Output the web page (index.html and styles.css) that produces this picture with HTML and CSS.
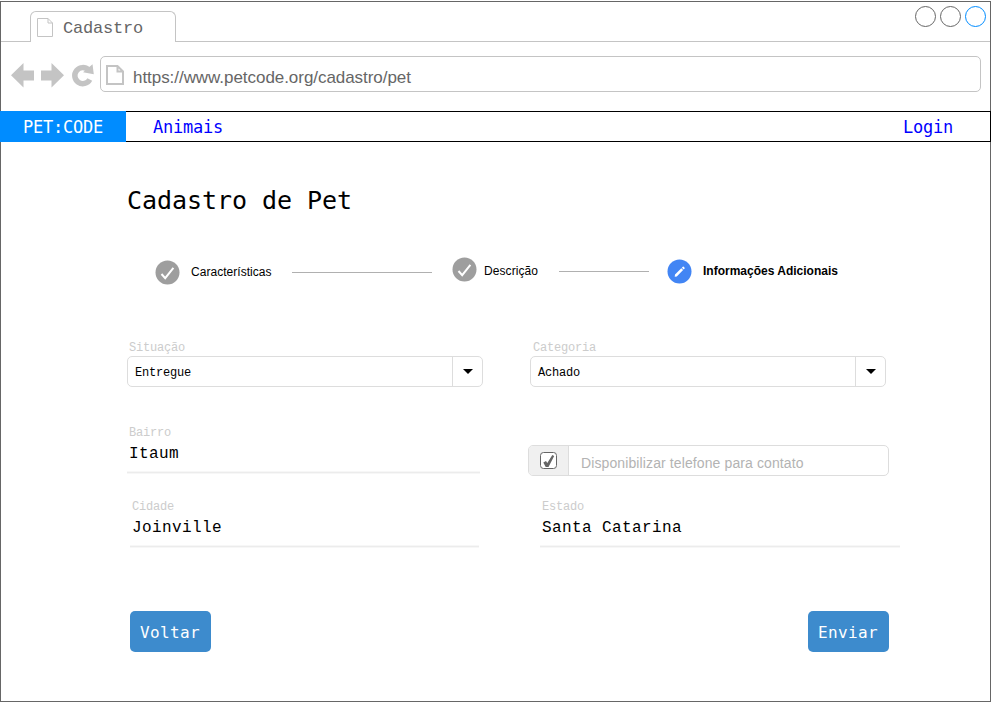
FILE: index.html
```html
<!DOCTYPE html>
<html lang="pt-BR">
<head>
<meta charset="utf-8">
<title>Cadastro</title>
<link rel="stylesheet" href="styles.css">
</head>
<body>
<div class="window">
  <header class="titlebar">
    <div class="tab">
      <svg class="tab-icon" width="16" height="19" viewBox="0 0 16 19"><path d="M.5.5h10.500l4.500 4.500v13.500H.5zM11 .5V5h4.500"/></svg>
      <span>Cadastro</span>
    </div>
    <div class="controls"><i></i><i></i><i class="active"></i></div>
  </header>
  <div class="toolbar">
    <svg class="nav-icons" width="84" height="26" viewBox="0 0 84 26">
      <path d="M0 12.300 12.500 0v7.500H23v10H12.500v7zM30 7.500h10.500V0L53 12.300 40.500 24.500v-7H30z"/>
      <path class="reload" d="M77.500 7A8 8 0 1 0 78.800 16.500"/>
      <path d="M81.500 1.200 82.800 11.300 72 9.300z"/>
    </svg>
    <div class="address">
      <svg class="page-icon" width="18" height="20" viewBox="0 0 18 20"><path d="M1 1h10.500L17 6.500V19H1zM11.500 1v5.500H17"/></svg>
      <span>https://www.petcode.org/cadastro/pet</span>
    </div>
  </div>
  <nav class="menu">
    <span class="brand">PET:CODE</span>
    <a class="animals">Animais</a>
    <a class="login">Login</a>
  </nav>
  <main>
    <h1>Cadastro de Pet</h1>
    <div class="steps">
      <svg class="dot first" width="25" height="25" viewBox="-.5 -.5 25 25"><circle cx="12" cy="12" r="12"/><path d="m6 13.500 3.700 4.200 8.200-10.300"/></svg>
      <span class="step one">Características</span>
      <hr class="line-one">
      <svg class="dot second" width="25" height="25" viewBox="-.5 -.5 25 25"><circle cx="12" cy="12" r="12"/><path d="m6 13.500 3.700 4.200 8.200-10.300"/></svg>
      <span class="step two">Descrição</span>
      <hr class="line-two">
      <svg class="dot current" width="25" height="25" viewBox="-.5 -.5 25 25"><circle cx="12" cy="12" r="12"/><path class="pencil" d="m7.200 17.300.3-2.200 6.300-6.300 1.800 1.800-6.300 6.300zM14.400 8.200l.9-.9q.5-.4.900 0l.9.900q.4.500 0 .9l-.9.900z"/></svg>
      <span class="step three">Informações Adicionais</span>
    </div>
    <div class="selects">
      <div class="field">
        <label>Situação</label>
        <div class="select"><span>Entregue</span><b><svg width="10" height="5" viewBox="0 0 10 5"><path d="M0 0h10L5 5z"/></svg></b></div>
      </div>
      <div class="field category">
        <label>Categoria</label>
        <div class="select"><span>Achado</span><b><svg width="10" height="5" viewBox="0 0 10 5"><path d="M0 0h10L5 5z"/></svg></b></div>
      </div>
    </div>
    <div class="contact-row">
      <div class="input district"><label>Bairro</label><span>Itaum</span></div>
      <div class="contact">
        <div class="check"><svg width="17" height="17" viewBox="0 0 17 17"><rect x=".5" y=".5" width="16" height="16" rx="3"/><path d="m3.300 10.500 2.700-1.400 1.300 2L12.300 3l1.900 1.100L8.500 15H5.700z"/></svg></div>
        <span>Disponibilizar telefone para contato</span>
      </div>
    </div>
    <div class="place-row">
      <div class="input city"><label>Cidade</label><span>Joinville</span></div>
      <div class="input state"><label>Estado</label><span>Santa Catarina</span></div>
    </div>
    <div class="actions"><button>Voltar</button><button>Enviar</button></div>
  </main>
</div>
</body>
</html>
```
FILE: styles.css
```css
* { box-sizing: border-box; }
body { margin: 0; padding-top: 1px; background: #fff; overflow: hidden; font-family: "Liberation Mono", monospace; color: #000; }
svg { display: block; flex: none; }
.window { width: 991px; height: 701px; border: 1px solid #666; }

.titlebar { height: 40px; display: flex; justify-content: space-between; box-shadow: inset 0 -1px #c4c4c4; }
.tab { width: 146px; height: 31px; margin: 9px 0 0 29px; padding-left: 6px; display: flex; gap: 10px; background: #fff; border: 1px solid #c4c4c4; border-bottom: 0; border-radius: 6px 6px 0 0; color: #666; font-size: 17px; line-height: 33px; letter-spacing: -.2px; }
.tab-icon { margin-top: 6px; fill: none; stroke: #c4c4c4; }
.controls { display: flex; gap: 4px; padding: 4px 4px 0 0; }
.controls i { width: 21px; height: 21px; border: 1px solid #666; border-radius: 50%; }
.controls .active { border-color: #008cff; }

.toolbar { height: 69px; padding: 14px 9px 0 10px; display: flex; }
.nav-icons { margin-top: 7px; fill: #c4c4c4; }
.reload { fill: none; stroke: #c4c4c4; stroke-width: 5.500; }
.address { width: 881px; height: 36px; margin-left: 5px; padding-left: 5px; display: flex; gap: 9px; border: 1px solid #c4c4c4; border-radius: 5px; color: #666; font: 17px/41px "Liberation Sans", sans-serif; letter-spacing: -.05px; }
.page-icon { margin-top: 8px; fill: none; stroke: #c4c4c4; stroke-width: 2; }

.menu { height: 31px; margin: 0 -1px; display: flex; border: 1px solid #000; border-left: 0; font: 17px/30px "DejaVu Sans Mono", monospace; letter-spacing: -.23px; }
.brand { width: 126px; height: 31px; margin-top: -1px; padding: 1px 0 0 23px; background: #008cff; color: #fff; }
.menu a { color: #00f; }
.animals { margin-left: 27px; }
.login { margin: 0 37px 0 auto; }

main { padding-left: 126px; }
h1 { height: 58px; margin: 44px 0 0; font: 25px/30px "DejaVu Sans Mono", monospace; letter-spacing: -.05px; }
.steps { height: 40px; margin-top: 13px; display: flex; align-items: flex-start; font: 12px/14px "Liberation Sans", sans-serif; white-space: nowrap; }
.dot { fill: #9e9e9e; }
.dot path { fill: none; stroke: #fff; stroke-width: 2; }
.first { margin: 3px 11px 0 28px; }
.step { margin-top: 7px; }
.one { width: 81px; margin-top: 8px; letter-spacing: .04px; }
.steps hr { height: 1px; margin: 14px 20px 0; border: 0; background: #b0b0b0; flex: none; }
.steps .line-one { width: 140px; margin-top: 15px; }
.second { margin-right: 7px; }
.two { width: 55px; letter-spacing: .08px; }
.steps .line-two { width: 90px; margin-right: 18px; }
.current { margin: 2px 11px 0 0; fill: #4285f4; }
.current .pencil { fill: #fff; stroke: none; }
.three { font-weight: 700; }

label { display: block; padding-left: 2px; color: #ccc; font-size: 12px; line-height: 14px; letter-spacing: -.2px; }
.selects { margin-top: 44px; display: flex; gap: 47px; }
.field { width: 356px; }
.category label { padding-left: 3px; }
.select { height: 31px; margin-top: 1px; display: flex; border: 1px solid #ddd; border-radius: 5px; font-size: 12px; line-height: 33px; letter-spacing: -.2px; }
.select span { flex: 1; padding-left: 7px; }
.select b { width: 30px; padding: 12px 0 0 10px; border-left: 1px solid #ddd; }

.input { background: linear-gradient(#f7f7f7 0 1px, #ececec 1px 2px, #f7f7f7 2px) bottom / 100% 3px no-repeat; }
.input span { display: block; padding-left: 2px; margin-top: 5px; font-size: 16px; line-height: 18px; letter-spacing: .4px; }
.contact-row { margin-top: 38px; display: flex; gap: 48px; }
.district { width: 353px; height: 49px; padding-top: 1px; }
.contact { width: 361px; height: 31px; margin-top: 20px; display: flex; border: 1px solid #ddd; border-radius: 5px; overflow: hidden; color: #b3b3b3; font: 14px/34px "Liberation Sans", sans-serif; letter-spacing: .11px; }
.check { width: 40px; margin-right: 12px; padding: 6px 0 0 11px; background: #f0f0f0; border-right: 1px solid #ddd; }
.check rect { fill: #fff; stroke: #666; }
.check path { fill: #666; }
.place-row { margin: 24px 0 0 3px; display: flex; gap: 61px; }
.city { width: 349px; height: 48px; }
.state { width: 360px; height: 48px; }

.actions { width: 759px; margin: 63px 0 0 3px; display: flex; justify-content: space-between; }
button { width: 81px; height: 41px; padding: 2px 1px 0 0; border: 0; border-radius: 5px; background: #3d8bcd; color: #fff; font: 16px/20px "DejaVu Sans Mono", monospace; letter-spacing: .37px; }
```
